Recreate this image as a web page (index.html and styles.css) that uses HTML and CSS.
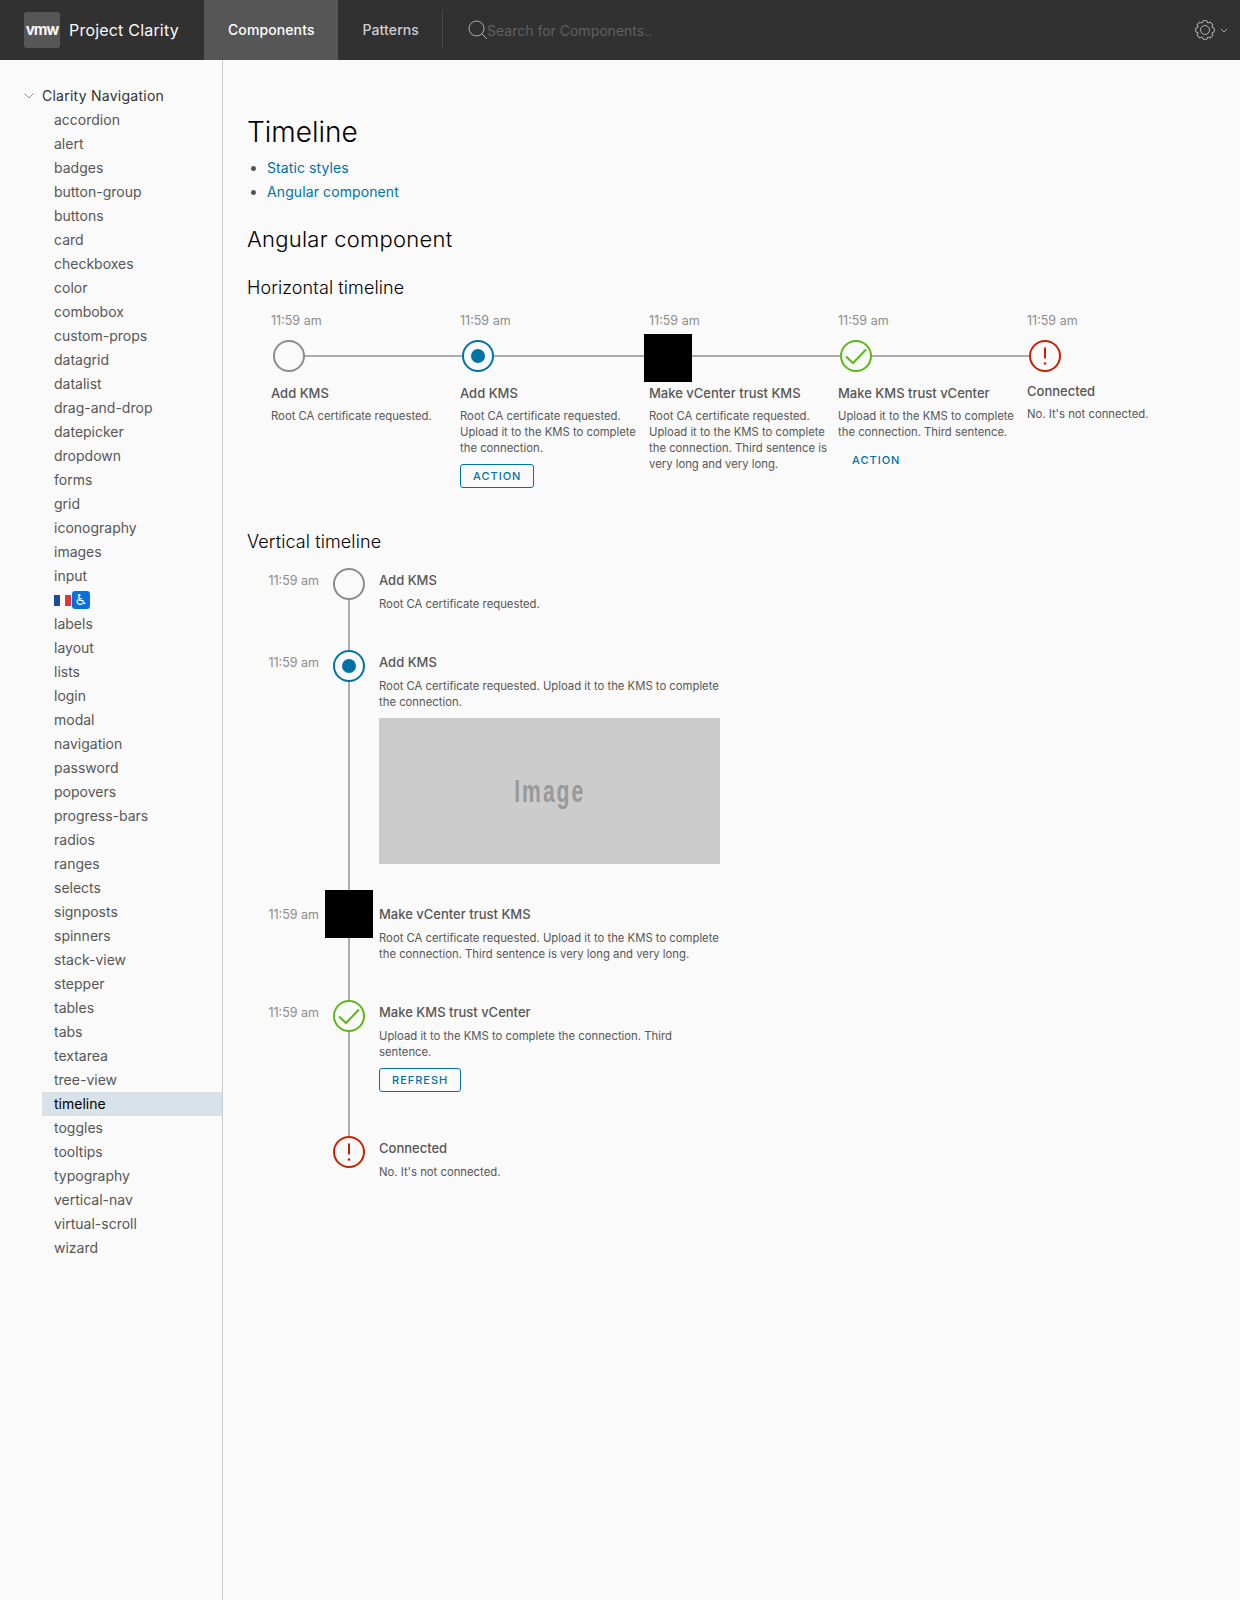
FILE: index.html
```html
<!DOCTYPE html>
<html lang="en">
<head>
    <meta charset="UTF-8">
    <title>Project Clarity - Timeline</title>
    <link rel="stylesheet" href="styles.css">
</head>
<body>
    <!-- shared timeline icons -->
    <svg class="icon-defs" aria-hidden="true">
        <symbol id="step-empty" viewBox="0 0 32 32"><circle cx="16" cy="16" r="15" fill="none" stroke="currentColor" stroke-width="2"/></symbol>
        <symbol id="step-current" viewBox="0 0 32 32"><circle cx="16" cy="16" r="15" fill="none" stroke="currentColor" stroke-width="2"/><circle cx="16" cy="16" r="7" fill="currentColor"/></symbol>
        <symbol id="step-success" viewBox="0 0 32 32"><circle cx="16" cy="16" r="15" fill="none" stroke="currentColor" stroke-width="2"/><path d="M6 16.5l7 6.5L26 9.5" fill="none" stroke="currentColor" stroke-width="2"/></symbol>
        <symbol id="step-error" viewBox="0 0 32 32"><circle cx="16" cy="16" r="15" fill="none" stroke="currentColor" stroke-width="2"/><path d="M16 7.5l.0 11" fill="none" stroke="currentColor" stroke-width="2"/><circle cx="16" cy="23.5" r="1.3" fill="currentColor"/></symbol>
        <path id="gear-tooth" d="M-2.83-6.84L-1.9-9.3H1.9L2.83-6.84" fill="none" stroke="currentColor"/>
    </svg>

    <header class="topbar">
        <div class="brand">
            <span class="brand-logo">vmw</span>
            <span class="brand-name">Project Clarity</span>
        </div>
        <nav class="tabs">
            <a class="tab active">Components</a>
            <a class="tab">Patterns</a>
        </nav>
        <div class="search">
            <svg class="search-icon" viewBox="0 0 20 20" width="20" height="20"><circle cx="8.5" cy="8.5" r="7.5" fill="none" stroke="currentColor"/><path d="M13.8 13.8L19 19" fill="none" stroke="currentColor"/></svg>
            <input class="search-input" type="text" placeholder="Search for Components..">
        </div>
        <div class="settings">
            <svg viewBox="-10 -10 20 20" width="20" height="20">
                <use href="#gear-tooth"/>
                <use href="#gear-tooth" transform="rotate(45)"/>
                <use href="#gear-tooth" transform="rotate(90)"/>
                <use href="#gear-tooth" transform="rotate(135)"/>
                <use href="#gear-tooth" transform="rotate(180)"/>
                <use href="#gear-tooth" transform="rotate(225)"/>
                <use href="#gear-tooth" transform="rotate(270)"/>
                <use href="#gear-tooth" transform="rotate(315)"/>
                <circle r="4.5" fill="none" stroke="currentColor"/>
            </svg>
            <svg viewBox="0 0 8 5" width="8" height="5"><path d="M1 1l3 3 3-3" fill="none" stroke="currentColor"/></svg>
        </div>
    </header>

    <div class="page">
        <aside class="sidebar">
            <div class="tree-root">
                <svg class="tree-caret" viewBox="0 0 10 6" width="10" height="6"><path d="M.5.5L5 5 9.5.5" fill="none" stroke="currentColor"/></svg>
                Clarity Navigation
            </div>
            <ul class="tree">
                <li>accordion</li>
                <li>alert</li>
                <li>badges</li>
                <li>button-group</li>
                <li>buttons</li>
                <li>card</li>
                <li>checkboxes</li>
                <li>color</li>
                <li>combobox</li>
                <li>custom-props</li>
                <li>datagrid</li>
                <li>datalist</li>
                <li>drag-and-drop</li>
                <li>datepicker</li>
                <li>dropdown</li>
                <li>forms</li>
                <li>grid</li>
                <li>iconography</li>
                <li>images</li>
                <li>input</li>
                <li class="tree-emoji"><span class="flag"></span><span class="a11y">♿</span></li>
                <li>labels</li>
                <li>layout</li>
                <li>lists</li>
                <li>login</li>
                <li>modal</li>
                <li>navigation</li>
                <li>password</li>
                <li>popovers</li>
                <li>progress-bars</li>
                <li>radios</li>
                <li>ranges</li>
                <li>selects</li>
                <li>signposts</li>
                <li>spinners</li>
                <li>stack-view</li>
                <li>stepper</li>
                <li>tables</li>
                <li>tabs</li>
                <li>textarea</li>
                <li>tree-view</li>
                <li class="active">timeline</li>
                <li>toggles</li>
                <li>tooltips</li>
                <li>typography</li>
                <li>vertical-nav</li>
                <li>virtual-scroll</li>
                <li>wizard</li>
            </ul>
        </aside>

        <main class="content">
            <h1>Timeline</h1>
            <ul class="toc">
                <li><a>Static styles</a></li>
                <li><a>Angular component</a></li>
            </ul>
            <h2>Angular component</h2>

            <h3>Horizontal timeline</h3>
            <div class="h-timeline">
                <div class="h-step">
                    <div class="time">11:59 am</div>
                    <div class="h-track">
                        <svg class="step-icon empty"><use href="#step-empty"/></svg>
                        <span class="h-line"></span>
                    </div>
                    <div class="step-title">Add KMS</div>
                    <p class="step-desc">Root CA certificate requested.</p>
                </div>
                <div class="h-step">
                    <div class="time">11:59 am</div>
                    <div class="h-track">
                        <svg class="step-icon current"><use href="#step-current"/></svg>
                        <span class="h-line"></span>
                    </div>
                    <div class="step-title">Add KMS</div>
                    <p class="step-desc">Root CA certificate requested. Upload it to the KMS to complete the connection.</p>
                    <button class="btn">Action</button>
                </div>
                <div class="h-step">
                    <div class="time">11:59 am</div>
                    <div class="h-track">
                        <span class="step-square"></span>
                        <span class="h-line"></span>
                    </div>
                    <div class="step-title">Make vCenter trust KMS</div>
                    <p class="step-desc">Root CA certificate requested. Upload it to the KMS to complete the connection. Third sentence is very long and very long.</p>
                </div>
                <div class="h-step">
                    <div class="time">11:59 am</div>
                    <div class="h-track">
                        <svg class="step-icon success"><use href="#step-success"/></svg>
                        <span class="h-line"></span>
                    </div>
                    <div class="step-title">Make KMS trust vCenter</div>
                    <p class="step-desc">Upload it to the KMS to complete the connection. Third sentence.</p>
                    <button class="btn btn-flat">Action</button>
                </div>
                <div class="h-step h-step-last">
                    <div class="time">11:59 am</div>
                    <div class="h-track">
                        <svg class="step-icon error"><use href="#step-error"/></svg>
                    </div>
                    <div class="step-title">Connected</div>
                    <p class="step-desc">No. It's not connected.</p>
                </div>
            </div>

            <h3 class="v-heading">Vertical timeline</h3>
            <div class="v-timeline">
                <div class="v-step">
                    <div class="time">11:59 am</div>
                    <div class="v-track">
                        <svg class="step-icon empty"><use href="#step-empty"/></svg>
                        <span class="v-line"></span>
                    </div>
                    <div class="v-body">
                        <div class="step-title">Add KMS</div>
                        <p class="step-desc">Root CA certificate requested.</p>
                    </div>
                </div>
                <div class="v-step">
                    <div class="time">11:59 am</div>
                    <div class="v-track">
                        <svg class="step-icon current"><use href="#step-current"/></svg>
                        <span class="v-line"></span>
                    </div>
                    <div class="v-body v-body-image">
                        <div class="step-title">Add KMS</div>
                        <p class="step-desc">Root CA certificate requested. Upload it to the KMS to complete the connection.</p>
                        <div class="placeholder"><span>Image</span></div>
                    </div>
                </div>
                <div class="v-step v-step-loading">
                    <div class="time">11:59 am</div>
                    <div class="v-track">
                        <span class="step-square"></span>
                        <span class="v-line"></span>
                    </div>
                    <div class="v-body">
                        <div class="step-title">Make vCenter trust KMS</div>
                        <p class="step-desc">Root CA certificate requested. Upload it to the KMS to complete the connection. Third sentence is very long and very long.</p>
                    </div>
                </div>
                <div class="v-step">
                    <div class="time">11:59 am</div>
                    <div class="v-track">
                        <svg class="step-icon success"><use href="#step-success"/></svg>
                        <span class="v-line"></span>
                    </div>
                    <div class="v-body v-body-button">
                        <div class="step-title">Make KMS trust vCenter</div>
                        <p class="step-desc">Upload it to the KMS to complete the connection. Third sentence.</p>
                        <button class="btn">Refresh</button>
                    </div>
                </div>
                <div class="v-step">
                    <div class="time"></div>
                    <div class="v-track">
                        <svg class="step-icon error"><use href="#step-error"/></svg>
                    </div>
                    <div class="v-body">
                        <div class="step-title">Connected</div>
                        <p class="step-desc">No. It's not connected.</p>
                    </div>
                </div>
            </div>
        </main>
    </div>
</body>
</html>
```

FILE: styles.css
```css
* {
    box-sizing: border-box;
}
body {
    margin: 0;
    min-height: 100vh;
    display: flex;
    flex-direction: column;
    background-color: #fafafa;
    color: #565656;
    font-family: 'Inter', 'Noto Sans', sans-serif;
    font-size: 14px;
}
.icon-defs {
    display: none;
}

/* top bar */
.topbar {
    display: flex;
    align-items: stretch;
    height: 60px;
    background-color: #313131;
    color: #fafafa;
}
.brand {
    display: flex;
    align-items: center;
    width: 204px;
    padding-left: 24px;
}
.brand-logo {
    width: 36px;
    height: 36px;
    line-height: 35px;
    text-align: center;
    border-radius: 3px;
    background-color: #565656;
    font-size: 15px;
    font-weight: 700;
    letter-spacing: -1px;
}
.brand-name {
    margin-left: 9px;
    font-size: 16px;
    letter-spacing: 0.2px;
}
.tabs {
    display: flex;
    align-items: center;
    height: 60px;
}
.tab {
    padding: 0 23px 0 25px;
    line-height: 60px;
    font-weight: 500;
    letter-spacing: 0.1px;
    color: #cfcfcf;
}
.tab.active {
    padding: 0 23px 0 24px;
    background-color: #565656;
    color: #fff;
}
.search {
    display: flex;
    align-items: center;
    margin: 10px 0;
    padding-left: 25px;
    border-left: 1px solid #484848;
    color: #b0b0b0;
}
.search-icon {
    flex: none;
}
.search-input {
    width: 300px;
    margin-left: -1px;
    padding: 0;
    border: none;
    outline: none;
    background: transparent;
    font: inherit;
    color: #fff;
}
.search-input::placeholder {
    color: #606060;
    opacity: 1;
}
.settings {
    display: flex;
    align-items: center;
    gap: 5px;
    margin-left: auto;
    padding-right: 12px;
    color: #b0b0b0;
}

/* page */
.page {
    flex: 1;
    display: grid;
    grid-template-columns: 223px 1fr;
}
.sidebar {
    padding-top: 23px;
    border-right: 1px solid #cccccc;
}
.tree-root {
    display: flex;
    align-items: center;
    height: 25px;
    padding-left: 24px;
    color: #313131;
    gap: 8px;
    letter-spacing: 0.25px;
}
.tree-caret {
    color: #8c8c8c;
}
.tree {
    margin: 0 0 0 42px;
    padding: 0;
    list-style: none;
}
.tree li {
    height: 24px;
    line-height: 24px;
    padding-left: 12px;
}
.tree li.active {
    background-color: #d8e3e9;
    color: #000;
}
.tree-emoji {
    display: flex;
    align-items: center;
    gap: 1px;
}
.flag {
    width: 17px;
    height: 11px;
    background: linear-gradient(90deg, #1c4b9c 0 36%, #fff 36% 66%, #e0353c 66%);
}
.a11y {
    width: 18px;
    height: 18px;
    line-height: 18px;
    border-radius: 3px;
    text-align: center;
    background-color: #0a6fe0;
    color: #fff;
    font-family: 'DejaVu Sans', sans-serif;
    font-size: 15px;
}

/* content */
.content {
    padding: 54px 24px 0;
}
h1 {
    margin: 0;
    font-size: 28px;
    line-height: 36px;
    font-weight: 300;
    color: #000;
}
.toc {
    margin: 6px 0 0;
    padding-left: 20px;
}
.toc li {
    line-height: 24px;
    letter-spacing: 0.1px;
}
.toc a {
    color: #0072a3;
}
h2 {
    margin: 19px 0 0;
    font-size: 22px;
    line-height: 32px;
    font-weight: 300;
    letter-spacing: 0.25px;
    color: #000;
}
h3 {
    margin: 21px 0 12px;
    font-size: 18px;
    line-height: 24px;
    font-weight: 300;
    letter-spacing: 0.1px;
    color: #000;
}
h3.v-heading {
    margin: 42px 0 14px;
}

/* timeline shared */
.time {
    font-size: 12.5px;
    line-height: 16px;
    color: #8c8c8c;
}
.step-icon {
    flex: none;
    width: 32px;
    height: 32px;
}
.step-icon.empty {
    color: #8c8c8c;
}
.step-icon.current {
    color: #0072a3;
}
.step-icon.success {
    color: #5eb715;
}
.step-icon.error {
    color: #c92100;
}
.step-square {
    flex: none;
    width: 48px;
    height: 48px;
    background-color: #000;
}
.step-title {
    font-size: 13px;
    line-height: 24px;
    font-weight: 500;
}
.step-desc {
    margin: 4px 0 0;
    font-size: 11.3px;
    line-height: 16px;
}
.btn {
    display: block;
    height: 24px;
    margin-top: 8px;
    padding: 0 12px;
    border: 1px solid #0072a3;
    border-radius: 3px;
    background: transparent;
    color: #0072a3;
    font-family: inherit;
    font-size: 11px;
    font-weight: 500;
    letter-spacing: 1px;
    text-transform: uppercase;
}
.btn-flat {
    border-color: transparent;
    margin-left: 1px;
}

/* horizontal */
.h-timeline {
    display: flex;
    padding-left: 24px;
}
.h-step {
    flex: none;
    width: 189px;
    padding-right: 10px;
}
.h-step .time {
    padding-top: 1px;
}
.h-track {
    display: flex;
    align-items: center;
    height: 48px;
    margin: 5px -12px 0 2px;
}
.h-track .step-icon,
.h-track .h-line {
    margin-bottom: 4px;
}
.h-track .step-square {
    margin-left: -7px;
}
.h-line {
    flex: 1;
    height: 2px;
    background-color: #adadad;
}
.h-step .step-title {
    margin-top: -1px;
}
.h-step .step-desc {
    margin-top: 3px;
}
.h-step-last .step-title {
    margin-top: -3px;
}

/* vertical */
.v-timeline {
    padding-left: 1px;
}
.v-step {
    display: grid;
    grid-template-columns: 71px 32px 341px;
    column-gap: 14px;
}
.v-step .time {
    padding-top: 1px;
    line-height: 24px;
    text-align: right;
}
.v-track {
    display: flex;
    flex-direction: column;
    align-items: center;
}
.v-track .step-square {
    margin: 0 -8px;
}
.v-line {
    flex: 1;
    width: 2px;
    background-color: #adadad;
}
.v-body {
    padding-bottom: 38px;
}
.v-body-image {
    padding-bottom: 26px;
}
.v-body-button {
    padding-bottom: 44px;
}
.v-step-loading .time {
    padding-top: 13px;
}
.v-step-loading .v-body {
    padding-top: 12px;
}
.placeholder {
    display: flex;
    align-items: center;
    justify-content: center;
    height: 146px;
    margin-top: 8px;
    background-color: #cccccc;
    color: #999999;
}
.placeholder span {
    display: block;
    font-family: 'Liberation Sans', sans-serif;
    font-size: 32px;
    font-weight: 700;
    letter-spacing: 3px;
    transform: scaleX(0.66);
}
```
